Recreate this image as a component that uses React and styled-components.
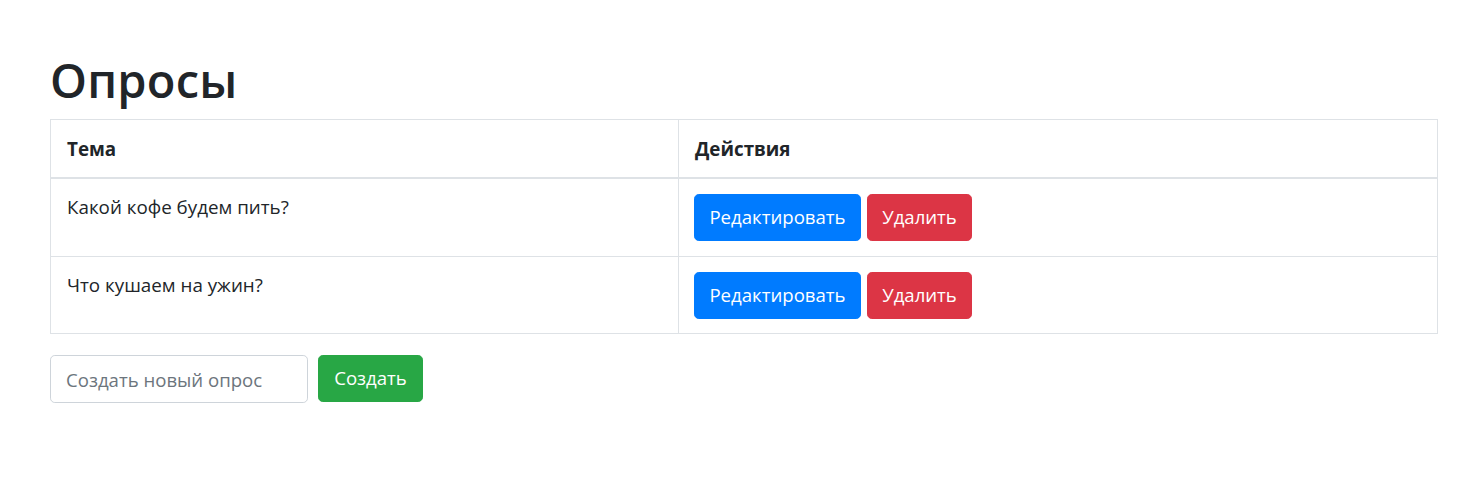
import React from "react";
import styled, { createGlobalStyle } from "styled-components";

const Global = createGlobalStyle`
  html, body { margin: 0; padding: 0; background: #fff; }
  body {
    font-family: "Open Sans", "Noto Sans", "Liberation Sans", sans-serif;
    color: #212529;
    font-size: 18.8px;
  }
  * { box-sizing: border-box; }
`;

const Page = styled.div`
  padding: 52px 37px 0 50px;
`;

const Title = styled.h1`
  margin: 0 0 9.6px;
  font-size: 47px;
  font-weight: 600;
  line-height: 57.6px;
  color: #212529;
  letter-spacing: 0.2px;
`;

const Table = styled.table`
  width: 1388px;
  border-collapse: collapse;
  margin-bottom: 21px;
`;

const Th = styled.th`
  text-align: left;
  font-weight: 700;
  padding: 14.4px 15px 13.4px 16px;
  line-height: 28.8px;
  border: 1px solid #dee2e6;
  border-bottom: 2px solid #dee2e6;
  width: ${(p) => p.$w || "auto"};
  vertical-align: bottom;
`;

const Td = styled.td`
  padding: 15.4px 15px 14.4px 15px;
  line-height: 28.8px;
  border: 1px solid #dee2e6;
  vertical-align: top;
  &:first-child { padding-left: 16px; padding-top: 14.4px; }
`;

const Actions = styled.div`
  display: flex;
  gap: 6px;
`;

const Button = styled.button`
  font-family: inherit;
  font-size: 18.6px;
  line-height: 28.8px;
  height: 47px;
  padding: 0 10px;
  width: ${(p) => p.$w};
  border: 1px solid ${(p) => p.$bg};
  background: ${(p) => p.$bg};
  color: #fff;
  border-radius: 4.8px;
  cursor: pointer;
  white-space: nowrap;
`;

const Form = styled.div`
  display: flex;
  gap: 10px;
`;

const Input = styled.input`
  width: 258px;
  height: 48px;
  padding: 0 15px;
  font-family: inherit;
  font-size: 18.6px;
  color: #495057;
  border: 1px solid #ced4da;
  border-radius: 4.8px;
  outline: none;
  &::placeholder { color: #6c757d; }
`;

const polls = ["Какой кофе будем пить?", "Что кушаем на ужин?"];

export default function App() {
  return (
    <>
      <Global />
      <Page>
        <Title>Опросы</Title>
        <Table>
          <thead>
            <tr>
              <Th $w="628px">Тема</Th>
              <Th>Действия</Th>
            </tr>
          </thead>
          <tbody>
            {polls.map((p) => (
              <tr key={p}>
                <Td>{p}</Td>
                <Td>
                  <Actions>
                    <Button $bg="#007bff" $w="167px">Редактировать</Button>
                    <Button $bg="#dc3545" $w="105px">Удалить</Button>
                  </Actions>
                </Td>
              </tr>
            ))}
          </tbody>
        </Table>
        <Form>
          <Input placeholder="Создать новый опрос" />
          <Button $bg="#28a745" $w="105px">Создать</Button>
        </Form>
      </Page>
    </>
  );
}
